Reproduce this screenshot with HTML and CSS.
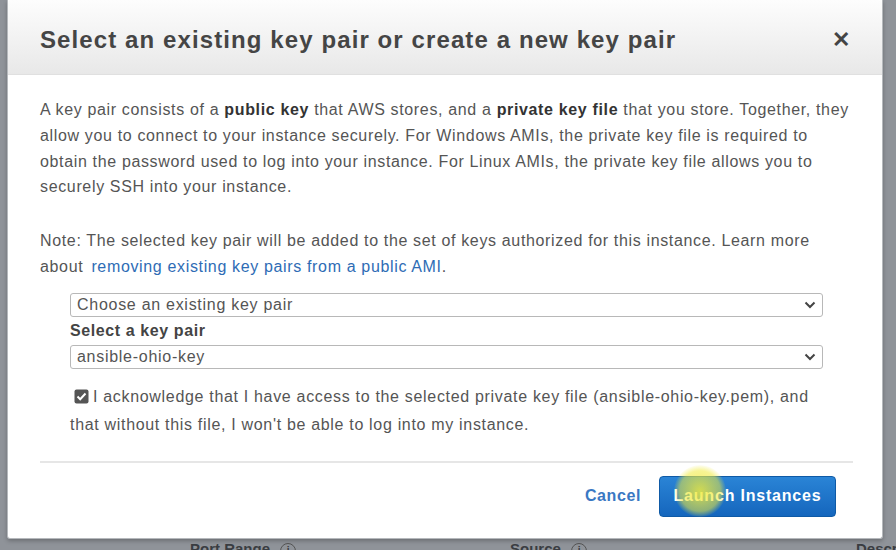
FILE: index.html
```html
<!DOCTYPE html>
<html>
<head>
<meta charset="utf-8">
<link rel="stylesheet" href="styles.css">
</head>
<body>
<div class="page">
  <div class="dialog">
    <div class="header">
      <h1 class="title">Select an existing key pair or create a new key pair</h1>
      <span class="close">&#x2715;</span>
    </div>
    <div class="content">
      <p class="para">A key pair consists of a <b>public key</b> that AWS stores, and a <b>private key file</b> that you store. Together, they allow you to connect to your instance securely. For Windows AMIs, the private key file is required to obtain the password used to log into your instance. For Linux AMIs, the private key file allows you to securely SSH into your instance.</p>
      <p class="para note">Note: The selected key pair will be added to the set of keys authorized for this instance. Learn more about <a class="link">removing existing key pairs from a public AMI</a>.</p>
      <div class="form">
        <div class="select"><span>Choose an existing key pair</span><svg class="chev" width="12" height="8" viewBox="0 0 12 8"><path d="M1.5 1.5 L6 6 L10.5 1.5" fill="none" stroke="#444" stroke-width="2"/></svg></div>
        <div class="label">Select a key pair</div>
        <div class="select"><span>ansible-ohio-key</span><svg class="chev" width="12" height="8" viewBox="0 0 12 8"><path d="M1.5 1.5 L6 6 L10.5 1.5" fill="none" stroke="#444" stroke-width="2"/></svg></div>
        <p class="ack"><span class="check"><svg width="15" height="15" viewBox="0 0 15 15"><rect x="0.5" y="0.5" width="14" height="14" rx="2" fill="#555"/><path d="M3.5 7.5 L6.2 10.2 L11.5 4.5" fill="none" stroke="#fff" stroke-width="2"/></svg></span>I acknowledge that I have access to the selected private key file (ansible-ohio-key.pem), and that without this file, I won't be able to log into my instance.</p>
      </div>
      <div class="footer">
        <a class="cancel">Cancel</a>
        <button class="launch">Launch Instances</button>
        <span class="cursor-glow"></span>
      </div>
    </div>
  </div>
  <div class="behind">
    <span class="bh1">Port Range <i class="info">i</i></span>
    <span class="bh2">Source <i class="info">i</i></span>
    <span class="bh3">Descri</span>
  </div>
</div>
</body>
</html>
```

FILE: styles.css
```css
html, body {
  margin: 0;
  padding: 0;
}
body {
  width: 896px;
  height: 550px;
  overflow: hidden;
  background: #8f9399;
  font-family: "Liberation Sans", Arial, sans-serif;
}
.page {
  position: relative;
  height: 550px;
  padding-left: 7px;
  overflow: hidden;
}
.dialog {
  width: 876px;
  height: 539px;
  background: #fff;
  border: 1px solid #b5b8bc;
  border-top: none;
  border-radius: 0 0 3px 3px;
  box-shadow: 0 2px 4px rgba(0,0,0,0.25);
  display: flex;
  flex-direction: column;
  box-sizing: border-box;
  position: relative;
  z-index: 2;
}
.header {
  height: 75px;
  flex: none;
  display: flex;
  align-items: center;
  justify-content: space-between;
  padding: 0 32px 0 32px;
  background: linear-gradient(#fdfdfd, #e8e8e8);
  border-bottom: 1px solid #e0e0e0;
  box-sizing: border-box;
  border-radius: 4px 4px 0 0;
}
.title {
  margin: 0;
  font-size: 24px;
  font-weight: bold;
  color: #454545;
  letter-spacing: 1.1px;
  padding-top: 6px;
}
.close {
  font-size: 22px;
  font-weight: bold;
  color: #444;
  padding-top: 6px;
}
.content {
  padding: 22px 29px 0 32px;
  display: flex;
  flex-direction: column;
  flex: 1;
}
.para {
  margin: 0;
  font-size: 16px;
  letter-spacing: 0.65px;
  line-height: 25.8px;
  color: #555;
}
.para b {
  color: #333;
}
.note {
  margin-top: 28px;
}
.link {
  color: #2e6cb5;
  margin-left: 3px;
}
.form {
  padding-left: 30px;
  padding-right: 30px;
  margin-top: 13px;
}
.select {
  height: 24px;
  border: 1px solid #b8b8b8;
  border-radius: 3px;
  box-sizing: border-box;
  display: flex;
  align-items: center;
  justify-content: space-between;
  padding: 0 6px 0 6px;
  font-size: 16px;
  letter-spacing: 0.72px;
  color: #555;
  background: #fff;
}
.label {
  font-size: 16px;
  letter-spacing: 0.6px;
  font-weight: bold;
  color: #444;
  height: 28px;
  line-height: 28px;
}
.ack {
  margin: 15px 0 0 0;
  font-size: 16px;
  letter-spacing: 0.68px;
  line-height: 26px;
  color: #555;
}
.check {
  display: inline-block;
  vertical-align: -2px;
  margin: 0 4px 0 4px;
}
.footer {
  margin-top: 23px;
  border-top: 2px solid #e6e6e6;
  display: flex;
  justify-content: flex-end;
  align-items: center;
  padding: 13px 17px 0 0;
  position: relative;
}
.cancel {
  font-size: 16px;
  letter-spacing: 0.6px;
  font-weight: bold;
  color: #3a78c3;
  margin-right: 18px;
}
.launch {
  width: 177px;
  height: 41px;
  border: 1px solid #0f5aa6;
  border-radius: 4px;
  background: linear-gradient(#2a84d6, #1566bd);
  color: #fff;
  font-family: "Liberation Sans", Arial, sans-serif;
  font-size: 16px;
  letter-spacing: 0.8px;
  font-weight: bold;
  padding: 0;
}
.cursor-glow {
  position: absolute;
  left: 634px;
  top: 2px;
  width: 52px;
  height: 52px;
  border-radius: 50%;
  background: radial-gradient(rgba(240,235,60,0.85), rgba(240,235,60,0.55) 55%, rgba(240,235,60,0) 72%);
  pointer-events: none;
}
.behind {
  position: absolute;
  left: 0;
  top: 538px;
  width: 896px;
  height: 12px;
  overflow: hidden;
  font-size: 15px;
  font-weight: bold;
  color: #3a3d42;
  z-index: 1;
}
.behind span {
  position: absolute;
  top: 2px;
}
.bh1 { left: 190px; }
.bh2 { left: 510px; }
.bh3 { left: 856px; }
.info {
  display: inline-block;
  width: 14px;
  height: 14px;
  border: 1px solid #555;
  border-radius: 50%;
  font-size: 10px;
  text-align: center;
  line-height: 14px;
  font-style: normal;
  margin-left: 6px;
}
```
